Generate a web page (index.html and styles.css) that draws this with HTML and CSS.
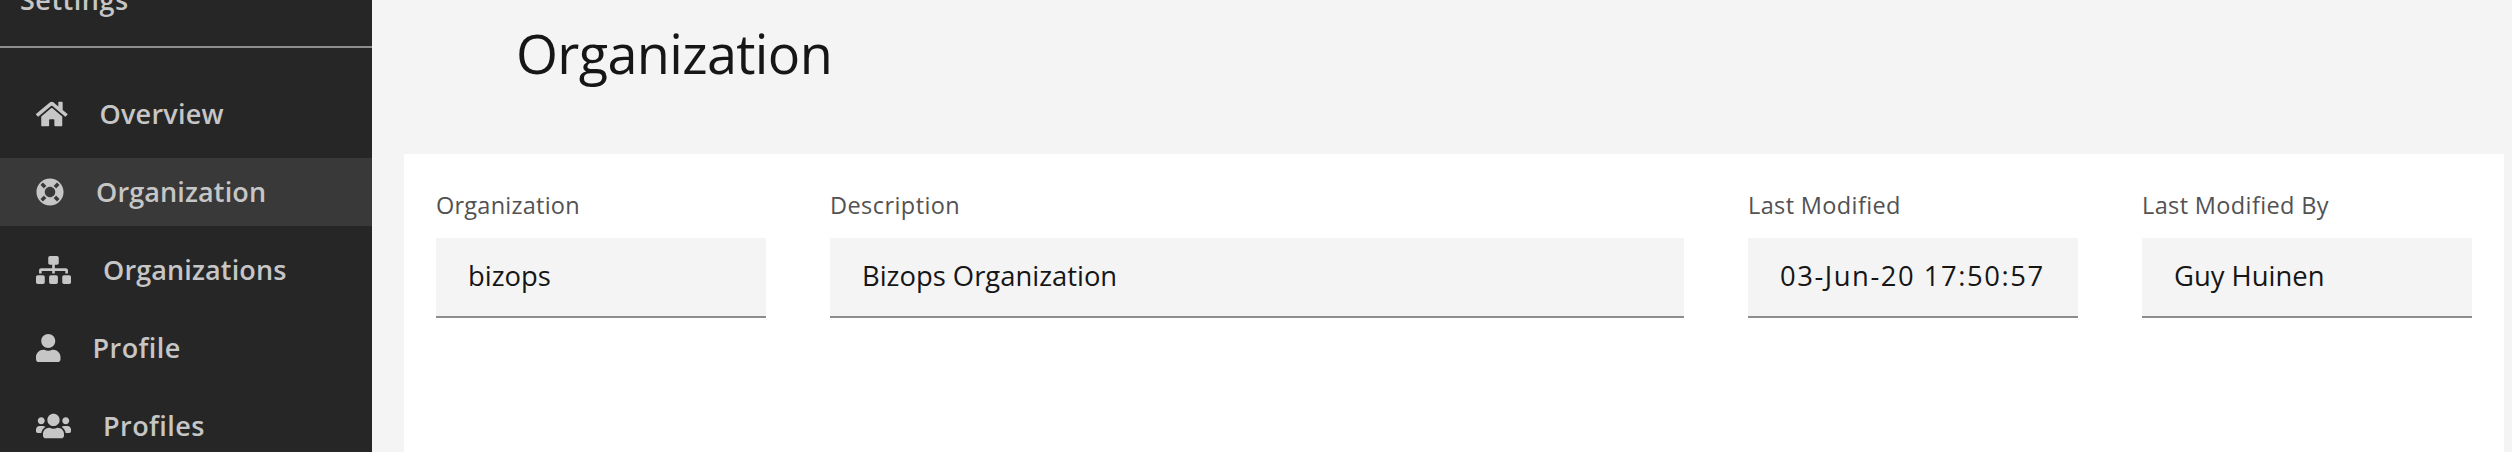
FILE: index.html
```html
<!DOCTYPE html>
<html lang="en">
<head>
<meta charset="utf-8">
<title>Organization</title>
<link rel="stylesheet" href="styles.css">
</head>
<body>
<div class="app">
  <aside class="sidebar">
    <div class="sidebar-header"><span class="sidebar-title">Settings</span></div>
    <nav class="nav">
      <a class="nav-item overview"><svg class="icon" viewBox="0 0 576 512"><path d="M280.37 148.26L96 300.11V464a16 16 0 0 0 16 16l112.06-.29a16 16 0 0 0 15.92-16V368a16 16 0 0 1 16-16h64a16 16 0 0 1 16 16v95.64a16 16 0 0 0 16 16.05L464 480a16 16 0 0 0 16-16V300L295.67 148.26a12.19 12.19 0 0 0-15.3 0zM571.6 251.47L488 182.56V44.05a12 12 0 0 0-12-12h-56a12 12 0 0 0-12 12v72.61L318.47 43a48 48 0 0 0-61 0L4.34 251.47a12 12 0 0 0-1.6 16.9l25.5 31A12 12 0 0 0 45.15 301l235.22-193.74a12.19 12.19 0 0 1 15.3 0L530.9 301a12 12 0 0 0 16.9-1.6l25.5-31a12 12 0 0 0-1.7-16.93z"/></svg><span>Overview</span></a>
      <a class="nav-item active"><svg class="icon" viewBox="0 0 512 512"><path d="M256 8C119.033 8 8 119.033 8 256s111.033 248 248 248 248-111.033 248-248S392.967 8 256 8zm173.696 119.559l-63.399 63.399c-10.987-18.559-26.67-34.252-45.255-45.255l63.399-63.399a218.396 218.396 0 0 1 45.255 45.255zM256 352c-53.019 0-96-42.981-96-96s42.981-96 96-96 96 42.981 96 96-42.981 96-96 96zM127.559 82.304l63.399 63.399c-18.559 10.987-34.252 26.67-45.255 45.255l-63.399-63.399a218.372 218.372 0 0 1 45.255-45.255zM82.304 384.441l63.399-63.399c10.987 18.559 26.67 34.252 45.255 45.255l-63.399 63.399a218.396 218.396 0 0 1-45.255-45.255zm302.137 45.255l-63.399-63.399c18.559-10.987 34.252-26.67 45.255-45.255l63.399 63.399a218.403 218.403 0 0 1-45.255 45.255z"/></svg><span>Organization</span></a>
      <a class="nav-item"><svg class="icon" viewBox="0 0 640 512"><path d="M128 352H32c-17.67 0-32 14.33-32 32v96c0 17.67 14.33 32 32 32h96c17.67 0 32-14.33 32-32v-96c0-17.67-14.33-32-32-32zm-24-80h192v48h48v-48h192v48h48v-57.59c0-21.17-17.23-38.41-38.41-38.41H344v-64h40c17.67 0 32-14.33 32-32V32c0-17.67-14.33-32-32-32H256c-17.67 0-32 14.33-32 32v96c0 17.67 14.33 32 32 32h40v64H94.41C73.23 224 56 241.23 56 262.41V320h48v-48zm264 80h-96c-17.67 0-32 14.33-32 32v96c0 17.67 14.33 32 32 32h96c17.67 0 32-14.33 32-32v-96c0-17.67-14.33-32-32-32zm240 0h-96c-17.67 0-32 14.33-32 32v96c0 17.67 14.33 32 32 32h96c17.67 0 32-14.33 32-32v-96c0-17.67-14.33-32-32-32z"/></svg><span>Organizations</span></a>
      <a class="nav-item profile"><svg class="icon" viewBox="0 0 448 512"><path d="M224 256c70.7 0 128-57.3 128-128S294.7 0 224 0 96 57.3 96 128s57.3 128 128 128zm89.6 32h-16.7c-22.2 10.2-46.9 16-72.9 16s-50.6-5.8-72.9-16h-16.7C60.2 288 0 348.2 0 422.4V464c0 26.5 21.5 48 48 48h352c26.5 0 48-21.5 48-48v-41.6c0-74.2-60.2-134.4-134.4-134.4z"/></svg><span>Profile</span></a>
      <a class="nav-item profile"><svg class="icon" viewBox="0 0 640 512"><path d="M96 224c35.3 0 64-28.7 64-64s-28.7-64-64-64-64 28.7-64 64 28.7 64 64 64zm448 0c35.3 0 64-28.7 64-64s-28.7-64-64-64-64 28.7-64 64 28.7 64 64 64zm32 32h-64c-17.6 0-33.5 7.1-45.1 18.6 40.3 22.1 68.9 62 75.1 109.4h66c17.7 0 32-14.3 32-32v-32c0-35.3-28.7-64-64-64zm-256 0c61.9 0 112-50.1 112-112S381.9 32 320 32 208 82.1 208 144s50.1 112 112 112zm76.8 32h-8.3c-20.8 10-43.9 16-68.5 16s-47.6-6-68.5-16h-8.3C179.6 288 128 339.6 128 403.2V432c0 26.5 21.5 48 48 48h288c26.5 0 48-21.5 48-48v-28.8c0-63.6-51.6-115.2-115.2-115.2zm-223.7-13.4C161.5 263.1 145.6 256 128 256H64c-35.3 0-64 28.7-64 64v32c0 17.7 14.3 32 32 32h65.9c6.3-47.4 34.9-87.3 75.2-109.4z"/></svg><span>Profiles</span></a>
    </nav>
  </aside>
  <main class="main">
    <h1 class="title">Organization</h1>
    <section class="card">
      <div class="field"><div class="label label-name">Organization</div><div class="value">bizops</div></div>
      <div class="field"><div class="label label-description">Description</div><div class="value">Bizops Organization</div></div>
      <div class="field"><div class="label">Last Modified</div><div class="value value-date">03-Jun-20 17:50:57</div></div>
      <div class="field"><div class="label">Last Modified By</div><div class="value">Guy Huinen</div></div>
    </section>
  </main>
</div>
</body>
</html>
```
FILE: styles.css
```css
* { box-sizing: border-box; }
body {
  margin: 0;
  font-family: "Open Sans", "Noto Sans", sans-serif;
  color: #161616;
  background: #f4f4f4;
}
.app { display: flex; height: 452px; overflow: hidden; }

/* Sidebar */
.sidebar {
  width: 372px;
  flex: none;
  background: #262626;
  color: #c6c6c6;
  font-weight: 600;
  font-size: 27px;
  line-height: 36px;
}
.sidebar-header {
  display: flex;
  align-items: flex-start;
  height: 48px;
  padding-left: 20px;
  border-bottom: 2px solid #8d8d8d;
}
.sidebar-title { margin-top: -18px; letter-spacing: 0.5px; }
.nav { display: flex; flex-direction: column; gap: 10px; padding-top: 32px; }
.nav-item {
  display: flex;
  align-items: center;
  gap: 32px;
  flex: none;
  height: 68px;
  padding-left: 36px;
  letter-spacing: 0.13px;
}
.overview { letter-spacing: 0.22px; }
.profile { letter-spacing: 0.44px; }
.active { background: #393939; }
.icon { flex: none; width: auto; height: 28px; margin-top: -1px; fill: currentColor; }

/* Content */
.main { flex: 1; padding: 0 8px 0 32px; }
.title {
  height: 154px;
  margin: 0;
  padding: 15px 0 0 112px;
  font-size: 54px;
  font-weight: 400;
  line-height: 76px;
  letter-spacing: -0.65px;
}
.card {
  display: grid;
  grid-template-columns: 330px 1fr 330px 330px;
  column-gap: 64px;
  align-content: start;
  height: 298px;
  padding: 32px 32px 0;
  background: #fff;
}
.label {
  height: 52px;
  font-size: 23.5px;
  line-height: 38px;
  letter-spacing: 0.37px;
  color: #525252;
}
.label-name { letter-spacing: 0.24px; }
.label-description { letter-spacing: 0.43px; }
.value {
  height: 80px;
  padding-left: 32px;
  border-bottom: 2px solid #8d8d8d;
  background: #f4f4f4;
  font-size: 27.4px;
  line-height: 76px;
  white-space: nowrap;
}
.value-date { letter-spacing: 1.55px; }
```
